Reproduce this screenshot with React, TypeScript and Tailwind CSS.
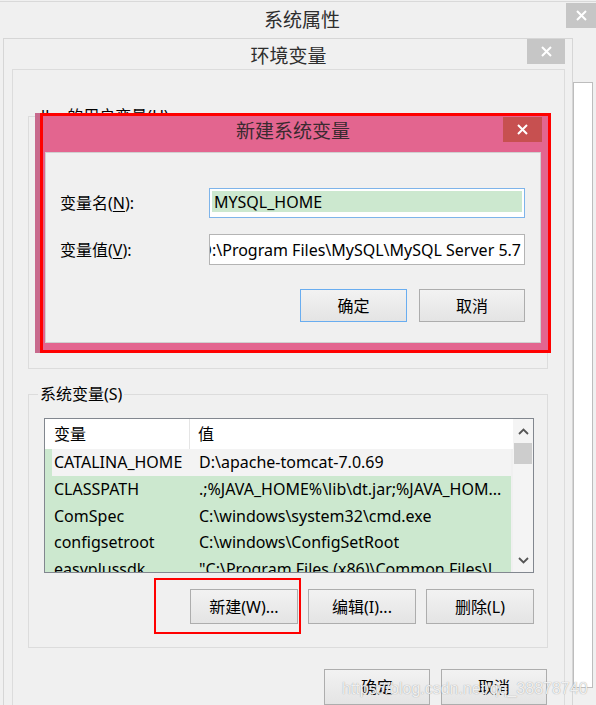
import React from "react";

const CloseX = () => (
    <svg width="11" height="11" viewBox="0 0 11 11">
        <path d="M1 1L10 10M10 1L1 10" stroke="white" strokeWidth="2" />
    </svg>
);

const Chevron = ({ up }: { up?: boolean }) => (
    <svg width="11" height="7" viewBox="0 0 11 7">
        <path d={up ? "M1 6L5.5 1.5L10 6" : "M1 1L5.5 5.5L10 1"} stroke="#555" strokeWidth="1.8" fill="none" />
    </svg>
);

const Button = ({ label, width, focused }: { label: string; width: string; focused?: boolean }) => (
    <div
        className={`${width} h-full flex items-center justify-center border bg-[linear-gradient(#f2f2f2,#e4e4e4)] text-[16px] text-black ${
            focused ? "border-[#69adf0]" : "border-[#adadad]"
        }`}
    >
        {label}
    </div>
);

const rows = [
    { name: "CATALINA_HOME", value: "D:\\apache-tomcat-7.0.69", selected: true },
    { name: "CLASSPATH", value: ".;%JAVA_HOME%\\lib\\dt.jar;%JAVA_HOM..." },
    { name: "ComSpec", value: "C:\\windows\\system32\\cmd.exe" },
    { name: "configsetroot", value: "C:\\windows\\ConfigSetRoot" },
    { name: "easyplussdk", value: "\"C:\\Program Files (x86)\\Common Files\\l" },
];

const App = () => {
    return (
        <div className="relative w-[596px] h-[705px] overflow-hidden bg-[#f0f0f0] font-[family-name:'Noto_Sans','Noto_Sans_CJK_SC',sans-serif] text-black">
            {/* 系统属性 title bar */}
            <div className="flex h-[37px] mt-px border-t border-[#d9d9d9]">
                <div className="flex-1 pt-[5px] pl-[38px] text-center text-[19px] leading-[26px] text-[#2e2e2e]">系统属性</div>
                <div className="w-[30px] h-[25px] mt-px bg-[#c6c6c6] flex items-center justify-center">
                    <CloseX />
                </div>
            </div>

            <div className="flex">
                {/* 环境变量 window */}
                <div className="ml-[3px] w-[570px] h-[668px] border-l border-r border-t border-[#d6d6d6] pl-[8px] pr-[7px] flex flex-col">
                    <div className="h-[36px] flex">
                        <div className="flex-1 pt-[4px] pl-[38px] text-center text-[19px] leading-[26px] text-[#2e2e2e]">环境变量</div>
                        <div className="w-[38px] h-[25px] bg-[#c6c6c6] flex items-center justify-center">
                            <CloseX />
                        </div>
                    </div>

                    <div className="flex-1 border border-[#dcdcdc] pl-[15px] pr-[16px] flex flex-col">
                        <fieldset className="mt-[36px] h-[263px] border border-[#dcdcdc]">
                            <legend className="ml-[10px] px-[2px] text-[16px] leading-[20px]">lhy 的用户变量(U)</legend>
                        </fieldset>

                        <fieldset className="mt-[15px] border border-[#dcdcdc] pl-[15px] pr-[13px] pb-[23px]">
                            <legend className="-ml-[6px] px-[2px] text-[16px] leading-[20px]">系统变量(S)</legend>

                            <div className="mt-[14px] h-[155px] border border-[#82878f] flex overflow-hidden">
                                <div className="flex-1 flex flex-col text-[16px]">
                                    <div className="h-[30px] shrink-0 bg-white flex">
                                        <div className="w-[145px] pl-[9px] flex items-center border-r border-[#e5e5e5]">变量</div>
                                        <div className="flex-1 pl-[8px] flex items-center">值</div>
                                    </div>
                                    <div className="flex-1 bg-[#cce8cf] mr-[2px]">
                                        {rows.map((r) => (
                                            <div
                                                key={r.name}
                                                className={`h-[26.7px] flex items-center whitespace-nowrap ${
                                                    r.selected ? "bg-[linear-gradient(to_right,#cce8cf_7px,#f3f3f3_7px)]" : ""
                                                }`}
                                            >
                                                <div className="w-[145px] shrink-0 pl-[9px]">{r.name}</div>
                                                <div className="pl-[9px] overflow-hidden">{r.value}</div>
                                            </div>
                                        ))}
                                    </div>
                                </div>
                                <div className="w-[20px] shrink-0 bg-[#f4f4f4] flex flex-col items-center">
                                    <div className="h-[24px] flex items-center">
                                        <Chevron up />
                                    </div>
                                    <div className="w-[18px] h-[21px] bg-[#cdcdcd]" />
                                    <div className="flex-1" />
                                    <div className="h-[24px] flex items-center">
                                        <Chevron />
                                    </div>
                                </div>
                            </div>

                            <div className="mt-[16px] h-[35px] flex justify-end gap-[10px]">
                                <Button label="新建(W)..." width="w-[108px]" />
                                <Button label="编辑(I)..." width="w-[108px]" />
                                <Button label="删除(L)" width="w-[108px]" />
                            </div>
                        </fieldset>

                        <div className="mt-[21px] h-[36px] flex justify-end gap-[11px] pr-px">
                            <Button label="确定" width="w-[106px]" />
                            <Button label="取消" width="w-[106px]" />
                        </div>
                    </div>
                </div>

                {/* list box of the window behind */}
                <div className="mt-[44px] w-[20px] h-[606px] bg-white border border-[#bdbdbd]" />
            </div>

            {/* 新建系统变量 dialog */}
            <div className="absolute left-[35px] top-[113px] w-[516px] h-[240px] bg-[#e3658f] border-l-[5px] border-[#c86a8d] pl-[5px] pr-[10px] pb-[10px] flex flex-col">
                <div className="h-[39px] shrink-0 flex">
                    <div className="w-[38px]" />
                    <div className="flex-1 pt-[5px] text-center text-[19px] leading-[26px] text-[#3a2a30]">新建系统变量</div>
                    <div className="w-[39px] h-[25px] mt-[4px] -mr-px bg-[#c75050] flex items-center justify-center">
                        <CloseX />
                    </div>
                </div>
                <div className="flex-1 bg-[#f0f0f0] border border-[#d0d0d0] pl-[14px] pr-[15px] pt-[35px] text-[16px]">
                    <div className="flex h-[30px]">
                        <div className="w-[149px] flex items-center">
                            变量名(<span className="underline underline-offset-2">N</span>):
                        </div>
                        <div className="flex-1 border border-[#7eb4ea] bg-white pt-[2px] pb-[5px] px-[2px]">
                            <div className="h-full bg-[#cce8cf] pl-[2px] flex items-center">MYSQL_HOME</div>
                        </div>
                    </div>
                    <div className="flex h-[31px] mt-[16px]">
                        <div className="w-[149px] flex items-center">
                            变量值(<span className="underline underline-offset-2">V</span>):
                        </div>
                        <div className="flex-1 border border-[#b4b4b4] bg-white overflow-hidden flex justify-end items-center pr-[3px]">
                            <span className="whitespace-nowrap">D:\Program Files\MySQL\MySQL Server 5.7</span>
                        </div>
                    </div>
                    <div className="flex justify-end gap-[12px] h-[33px] mt-[24px]">
                        <Button label="确定" width="w-[107px]" focused />
                        <Button label="取消" width="w-[106px]" />
                    </div>
                </div>
            </div>

            {/* annotation boxes */}
            <div className="absolute left-[40px] top-[113px] w-[511px] h-[240px] border-[3px] border-[#ff0000]" />
            <div className="absolute left-[154px] top-[578px] w-[147px] h-[56px] border-2 border-[#ff0000]" />

            {/* watermark */}
            <div className="absolute left-[342px] top-[677px] font-['Liberation_Sans',sans-serif] text-[16px] text-white/85 [text-shadow:0_0_1px_#8a8a8a]">
                https://blog.csdn.net/qq_38878740
            </div>
        </div>
    );
};

export default App;
